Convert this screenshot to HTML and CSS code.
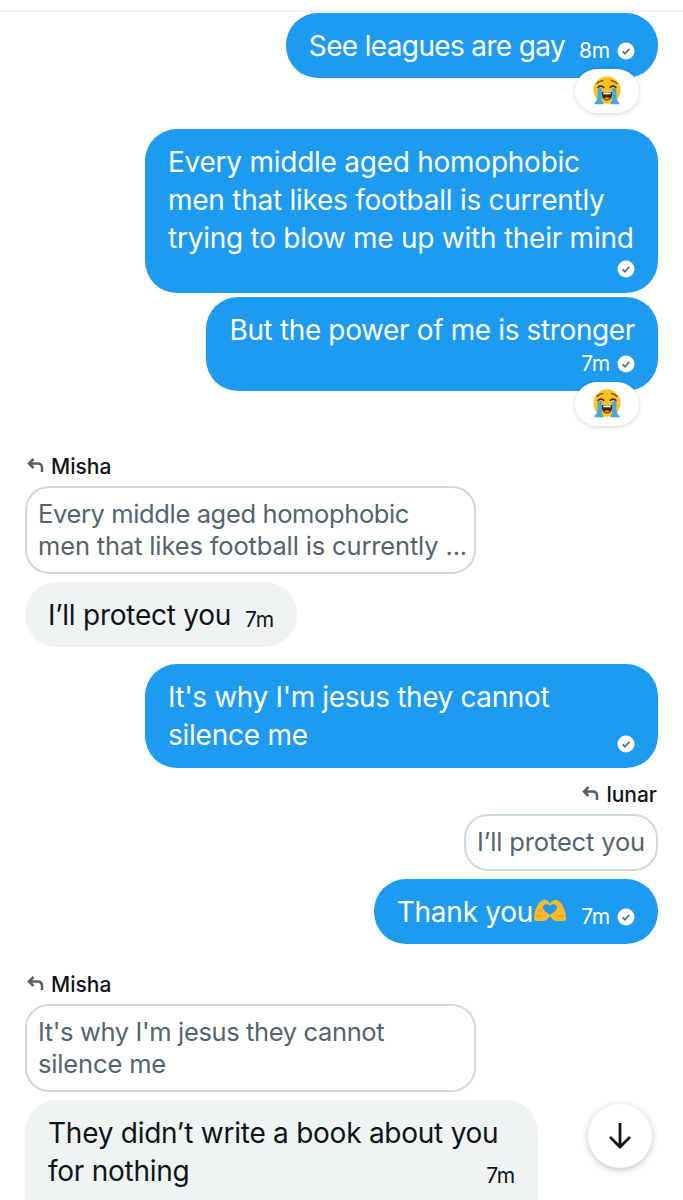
FILE: index.html
```html
<!DOCTYPE html>
<html lang="en">
<head>
  <meta charset="UTF-8" />
  <meta name="viewport" content="width=device-width, initial-scale=1.0"/>
  <title>Messages</title>
  <link rel="stylesheet" href="styles.css">
</head>
<body>
  <svg class="defs" width="0" height="0">
    <defs>
      <symbol id="check" viewBox="0 0 18 18">
        <circle cx="9" cy="9" r="8.5" fill="#fff"/>
        <path d="M5.6 9.3l2.4 2.4 4.4-5" fill="none" stroke="#4a6f8f" stroke-width="1.7"/>
      </symbol>
      <symbol id="cry" viewBox="0 0 32 32">
        <circle cx="16" cy="15" r="14.5" fill="#fcc21b"/>
        <path d="M5 8.500c2-2.500 4.500-3.500 7-3.500M27 8.500c-2-2.500-4.500-3.500-7-3.500" fill="none" stroke="#6b4a14" stroke-width="1.300"/>
        <path d="M6 12.500c2-2.200 5-2.200 7 0M19 12.500c2-2.200 5-2.200 7 0" fill="none" stroke="#3d2a0c" stroke-width="1.800"/>
        <path d="M10.500 17h11c.5 4-1 9-5.500 9s-6-5-5.500-9z" fill="#3d2a0c"/>
        <path d="M12 17.500h8v2h-8z" fill="#fff"/>
        <path d="M13 24c1-1.500 5-1.500 6 0-1 1.500-5 1.500-6 0z" fill="#f0a028"/>
        <path d="M6 13h4.500v13c1 2 2 3 2 4H2.500c0-2 3.500-4 3.500-8zM21.500 13H26v9c0 4 3.500 6 3.500 8h-10c0-1 1-2 2-4z" fill="#46a8e0"/>
      </symbol>
      <symbol id="heart-hands" viewBox="0 0 34 24">
        <path d="M1 21C1 12 5 4 10 2c3-1 6 1 7 4 1-3 4-5 7-4 5 2 9 10 9 19 0 1-1 2-3 2h-6c-3 0-5-2-7-5-2 3-4 5-7 5H4c-2 0-3-1-3-2z" fill="#fbb829"/>
        <path d="M17 8c1.500-2.500 6-2.500 7 .5 1 3-3.500 6-7 8.500-3.500-2.500-8-5.500-7-8.500 1-3 5.500-3 7-.5z" fill="#2196f3"/>
        <path d="M3 18c2-.5 4-.5 6 .5M31 18c-2-.5-4-.5-6 .5" fill="none" stroke="#e8930c" stroke-width="1"/>
      </symbol>
      <symbol id="reply" viewBox="0 0 17 15">
        <path d="M6.500 1L2 5.500 6.500 10M2 5.500h8.500c3 0 4.500 2 4.500 4.500v4" fill="none" stroke="#565f66" stroke-width="2.500"/>
      </symbol>
    </defs>
  </svg>

  <div class="thread">
    <div class="group sent first">
      <div class="bubble inline">
        <span class="snug">See leagues are gay</span>
        <span class="time">8m</span>
        <svg class="check"><use href="#check"/></svg>
      </div>
      <div class="reaction"><svg class="emoji"><use href="#cry"/></svg></div>
    </div>

    <div class="group sent after-reaction">
      <div class="bubble wide">
        Every middle aged homophobic<br>men that likes football is currently<br>trying to blow me up with their mind
        <div class="meta check-only"><svg class="check"><use href="#check"/></svg></div>
      </div>
      <div class="bubble">
        <span class="tighter">But the power of me is stronger</span>
        <div class="meta"><span class="time">7m</span><svg class="check"><use href="#check"/></svg></div>
      </div>
      <div class="reaction"><svg class="emoji"><use href="#cry"/></svg></div>
    </div>

    <div class="group received misha-one">
      <div class="reply-to"><svg class="reply-icon"><use href="#reply"/></svg>Misha</div>
      <div class="quote long"><span class="tighter">Every middle aged homophobic</span><br>men that likes football is currently ...</div>
      <div class="bubble inline gray">
        <span>I’ll protect you</span>
        <span class="time">7m</span>
      </div>
    </div>

    <div class="group sent jesus">
      <div class="bubble wide">
        <span class="tighter">It's why I'm jesus they cannot</span><br>silence me
        <div class="meta overlap"><svg class="check"><use href="#check"/></svg></div>
      </div>
    </div>

    <div class="group sent lunar">
      <div class="reply-to"><svg class="reply-icon"><use href="#reply"/></svg>lunar</div>
      <div class="quote">I’ll protect you</div>
      <div class="bubble inline">
        <span class="with-emoji">Thank you<svg class="heart"><use href="#heart-hands"/></svg></span>
        <span class="time">7m</span>
        <svg class="check"><use href="#check"/></svg>
      </div>
    </div>

    <div class="group received misha-two">
      <div class="reply-to"><svg class="reply-icon"><use href="#reply"/></svg>Misha</div>
      <div class="quote long"><span class="tighter">It's why I'm jesus they cannot</span><br>silence me</div>
      <div class="bubble wide gray">
        They didn’t write a book about you<br>for nothing
        <div class="meta overlap time-only"><span class="time">7m</span></div>
      </div>
    </div>
  </div>

  <button class="scroll-down" aria-label="Scroll to bottom">
    <svg width="26" height="28" viewBox="0 0 26 28"><path d="M13 1v25M3 15l10 10 10-10" fill="none" stroke="#0f1419" stroke-width="2.800"/></svg>
  </button>
</body>
</html>
```

FILE: styles.css
```css
* {
  box-sizing: border-box;
}

html, body {
  height: 1200px;
  overflow: hidden;
}

body {
  margin: 0;
  position: relative;
  background: #fff;
  color: #0f1419;
  font-family: Inter, "Noto Sans", sans-serif;
  letter-spacing: -0.25px;
}

.defs {
  position: absolute;
}

.thread {
  margin-top: 10px;
  padding: 3px 25px 0;
  border-top: 2px solid #eff3f4;
  display: flex;
  flex-direction: column;
}

.group {
  display: flex;
  flex-direction: column;
  gap: 4px;
}

.sent {
  align-items: flex-end;
}

.received {
  align-items: flex-start;
}

.first {
  margin-top: -2px;
}

.after-reaction {
  margin-top: 16px;
}

.misha-one {
  margin-top: 29px;
}

.jesus {
  margin-top: 17px;
}

.lunar {
  margin-top: 15px;
}

.misha-two {
  margin-top: 29px;
}

.bubble {
  background: #1d9bf0;
  color: #fff;
  border-radius: 32px;
  padding: 14px 23px 13px;
  font-size: 28px;
  line-height: 38px;
}

.bubble.gray {
  background: #eff3f4;
  color: #0f1419;
}

.bubble.wide {
  width: 513px;
}

.bubble.inline {
  display: flex;
  align-items: center;
}

.misha-two .bubble {
  height: 130px;
}

.snug {
  letter-spacing: -0.65px;
}

.tighter {
  letter-spacing: -0.37px;
}

.time {
  font-size: 21px;
  line-height: 29px;
  margin-left: 14px;
  letter-spacing: -0.2px;
  padding-top: 8px;
}

.check {
  width: 18px;
  height: 18px;
  margin-left: 7px;
  margin-top: 9px;
  flex: none;
}

.meta {
  display: flex;
  justify-content: flex-end;
  align-items: center;
  height: 29px;
}

.meta .time {
  padding-top: 0;
}

.meta .check {
  margin-top: 0;
}

.check-only {
  height: 23px;
}

.overlap {
  height: 23px;
  margin-top: -22px;
}

.time-only {
  margin-top: -26px;
}

.reaction {
  width: 64px;
  height: 44px;
  margin-top: -13px;
  margin-right: 19px;
  border-radius: 22px;
  background: #fff;
  box-shadow: 0 1px 4px rgba(15, 20, 25, 0.18);
  display: flex;
  align-items: center;
  justify-content: center;
  position: relative;
}

.emoji {
  width: 30px;
  height: 30px;
}

.reply-to {
  display: flex;
  align-items: center;
  font-size: 21px;
  line-height: 24px;
  font-weight: 500;
  letter-spacing: 0;
  margin-right: 1px;
  margin-left: 2px;
  margin-bottom: 3px;
}

.reply-icon {
  width: 17px;
  height: 15px;
  margin-right: 7px;
  margin-top: -4px;
}

.quote {
  border: 2px solid #cfd9de;
  border-radius: 24px;
  padding: 10px 11px;
  margin-bottom: 4px;
  min-height: 57px;
  color: #536471;
  font-size: 25.500px;
  line-height: 32px;
  letter-spacing: -0.15px;
}

.quote.long {
  width: 451px;
  white-space: nowrap;
}

.with-emoji {
  display: inline-flex;
  align-items: center;
}

.heart {
  width: 34px;
  height: 24px;
  margin-top: -4px;
}

.scroll-down {
  position: absolute;
  left: 588px;
  top: 1104px;
  width: 64px;
  height: 64px;
  padding: 0;
  border: none;
  border-radius: 50%;
  background: #fff;
  box-shadow: 0 2px 7px rgba(15, 20, 25, 0.25);
  display: flex;
  align-items: center;
  justify-content: center;
}
```
